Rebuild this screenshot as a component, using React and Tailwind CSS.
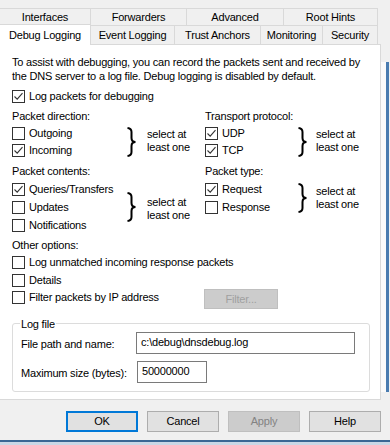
import React from 'react';

const Check = ({ checked }) => (
  <span className="w-[13px] h-[13px] shrink-0 border border-[#333333] bg-white flex items-center justify-center">
    {checked && (
      <svg width="11" height="11" viewBox="0 0 11 11">
        <path d="M1.5 5.5 L4.2 8.2 L9.5 2.2" fill="none" stroke="#333333" strokeWidth="1.1" />
      </svg>
    )}
  </span>
);

const CheckRow = ({ label, checked, h = 'h-[17px]' }) => (
  <div className={`flex items-center ${h}`}>
    <Check checked={checked} />
    <span className="ml-[4px] whitespace-nowrap">{label}</span>
  </div>
);

const Brace = ({ height = 30 }) => (
  <svg width="12" height={height} viewBox={`0 0 12 ${height}`}>
    <path
      d={`M2.5 1 Q6.5 1.5 6.5 5 L6.5 ${height / 2 - 4} Q6.5 ${height / 2} 10.5 ${height / 2} Q6.5 ${height / 2} 6.5 ${height / 2 + 4} L6.5 ${height - 5} Q6.5 ${height - 1.5} 2.5 ${height - 1}`}
      fill="none"
      stroke="#000"
      strokeWidth="2"
    />
  </svg>
);

const Note = () => (
  <div className="leading-[13px] whitespace-nowrap">
    select at
    <br />
    least one
  </div>
);

const Tab = ({ label, w, top }) => (
  <div
    className={`${w} h-full flex items-center justify-center whitespace-nowrap border-r border-[#d9d9d9] ${
      top ? 'border-t border-b' : ''
    } bg-[#f0f0f0]`}
  >
    {label}
  </div>
);

const Button = ({ label, primary, disabled }) => (
  <div
    className={`w-[72px] h-[21px] flex items-center justify-center ${
      primary
        ? 'border-2 border-[#0078d7] bg-[#e1e1e1]'
        : disabled
        ? 'border border-[#bfbfbf] bg-[#cccccc] text-[#838383]'
        : 'border border-[#adadad] bg-[#e1e1e1]'
    }`}
  >
    {label}
  </div>
);

export default function App() {
  return (
    <div className="w-[390px] h-[445px] overflow-hidden bg-[#f0f0f0] text-[11px] tracking-[-0.2px] text-black font-['Liberation_Sans',Arial,sans-serif] flex flex-col">
      {/* Tabs */}
      <div className="pt-[8px]">
        <div className="flex h-[18px]">
          <Tab label="Interfaces" w="w-[91px]" top />
          <Tab label="Forwarders" w="w-[96px]" top />
          <Tab label="Advanced" w="w-[97px]" top />
          <Tab label="Root Hints" w="w-[94px]" top />
        </div>
        <div className="flex h-[18px]">
          <div className="relative z-10 w-[91px] h-[21px] -mt-[2px] bg-white border-r border-t border-[#d9d9d9] flex items-center justify-center pt-[1px]">
            Debug Logging
          </div>
          <Tab label="Event Logging" w="w-[84px]" />
          <Tab label="Trust Anchors" w="w-[86px]" />
          <Tab label="Monitoring" w="w-[62px]" />
          <Tab label="Security" w="w-[55px]" />
        </div>
      </div>

      <div className="flex">
        {/* Panel */}
        <div className="w-[381px] h-[356px] shrink-0 bg-white border-t border-r border-b border-[#d9d9d9] flex flex-col">
          <div className="mt-[10px] pl-[12px] leading-[14px] whitespace-nowrap">
            To assist with debugging, you can record the packets sent and received by
            <br />
            the DNS server to a log file. Debug logging is disabled by default.
          </div>

          <div className="mt-[4px] pl-[12px]">
            <CheckRow label="Log packets for debugging" checked h="h-[18px]" />
          </div>

          {/* Direction / transport */}
          <div className="mt-[3px] pl-[12px] flex">
            <div className="w-[193px]">
              <div className="h-[17px] flex items-center">Packet direction:</div>
              <div className="flex">
                <div className="w-[113px]">
                  <CheckRow label="Outgoing" />
                  <CheckRow label="Incoming" checked />
                </div>
                <div className="mt-[2px]">
                  <Brace height={30} />
                </div>
                <div className="ml-[10px] mt-[3px]">
                  <Note />
                </div>
              </div>
            </div>
            <div>
              <div className="h-[17px] flex items-center">Transport protocol:</div>
              <div className="flex">
                <div className="w-[91px]">
                  <CheckRow label="UDP" checked />
                  <CheckRow label="TCP" checked />
                </div>
                <div className="mt-[2px]">
                  <Brace height={30} />
                </div>
                <div className="ml-[8px] mt-[3px]">
                  <Note />
                </div>
              </div>
            </div>
          </div>

          {/* Contents / type */}
          <div className="mt-[4px] pl-[12px] flex">
            <div className="w-[193px]">
              <div className="h-[17px] flex items-center">Packet contents:</div>
              <div className="flex">
                <div className="w-[113px]">
                  <CheckRow label="Queries/Transfers" checked h="h-[18px]" />
                  <CheckRow label="Updates" h="h-[18px]" />
                  <CheckRow label="Notifications" h="h-[18px]" />
                </div>
                <div className="mt-[12px]">
                  <Brace height={30} />
                </div>
                <div className="ml-[10px] mt-[16px]">
                  <Note />
                </div>
              </div>
            </div>
            <div>
              <div className="h-[17px] flex items-center">Packet type:</div>
              <div className="flex">
                <div className="w-[91px]">
                  <CheckRow label="Request" checked h="h-[18px]" />
                  <CheckRow label="Response" h="h-[18px]" />
                </div>
                <div className="mt-[3px]">
                  <Brace height={30} />
                </div>
                <div className="ml-[8px] mt-[5px]">
                  <Note />
                </div>
              </div>
            </div>
          </div>

          {/* Other options */}
          <div className="mt-[2px] pl-[12px]">
            <div className="h-[18px] flex items-center">Other options:</div>
            <CheckRow label="Log unmatched incoming response packets" />
            <CheckRow label="Details" h="h-[18px]" />
            <div className="flex items-start">
              <div className="w-[192px]">
                <CheckRow label="Filter packets by IP address" />
              </div>
              <div className="w-[74px] h-[20px] border border-[#bfbfbf] bg-[#cccccc] text-[#a0a0a0] flex items-center justify-center">
                Filter...
              </div>
            </div>
          </div>

          {/* Log file group */}
          <div className="mt-[14px] ml-[12px] w-[358px] h-[69px] border border-[#dcdcdc] rounded-[3px]">
            <div className="-mt-[7px] ml-[7px] w-fit px-[1px] bg-white leading-[14px]">Log file</div>
            <div className="mt-[1px] ml-[8px] flex items-center">
              <div className="w-[115px] pt-[3px] whitespace-nowrap">File path and name:</div>
              <div className="w-[219px] h-[22px] border border-[#7a7a7a] pl-[4px] flex items-center pb-[1px]">
                c:\debug\dnsdebug.log
              </div>
            </div>
            <div className="mt-[7px] ml-[8px] flex items-center">
              <div className="w-[116px] pt-[3px] whitespace-nowrap">Maximum size (bytes):</div>
              <div className="w-[70px] h-[22px] border border-[#7a7a7a] pl-[4px] flex items-center pb-[1px]">
                50000000
              </div>
            </div>
          </div>
        </div>

        {/* window edge behind */}
        <div className="mt-[18px] h-[330px] flex">
          <div className="w-[5px] bg-[#fbfbfb]" />
          <div className="w-[3px] bg-[#4a7cb0]" />
        </div>
      </div>

      {/* Buttons */}
      <div className="mt-[11px] pl-[66px] flex gap-[9px]">
        <Button label="OK" primary />
        <Button label="Cancel" />
        <Button label="Apply" disabled />
        <Button label="Help" />
      </div>

      <div className="mt-[8px] h-[2px] bg-[#3a6794]" />
      <div className="flex-1 bg-[#c9d8e6]" />
    </div>
  );
}
